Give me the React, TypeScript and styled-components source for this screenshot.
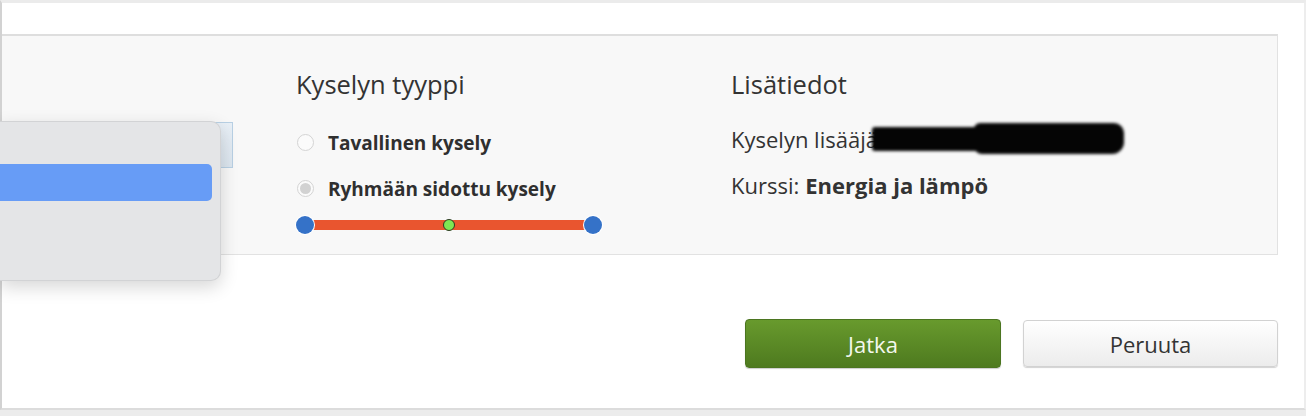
import styled, { createGlobalStyle } from "styled-components"

const GlobalStyle = createGlobalStyle`
  html, body {
    margin: 0;
    padding: 0;
    background: #ffffff;
  }
  body {
    font-family: "Open Sans", "Liberation Sans", sans-serif;
    color: #333333;
  }
  * { box-sizing: border-box; }
`

const Page = styled.div`
  width: 1306px;
  height: 416px;
  display: flex;
  flex-direction: column;
  overflow: hidden;
`

const Main = styled.div`
  position: relative;
  flex: 1;
  display: flex;
  flex-direction: column;
  border-top: 3px solid #ebebeb;
  border-left: 2px solid #d2d2d2;
  border-right: 2px solid #ededed;
  border-bottom: 2px solid #dcdcdc;
  padding: 31px 26px 0 0;
`

const BottomStripe = styled.div`
  height: 6px;
  background: #ececec;
`

const Panel = styled.div`
  height: 221px;
  display: grid;
  grid-template-columns: 294px 435px 1fr;
  background: #f8f8f8;
  border: 1px solid #e2e2e2;
  border-top: 2px solid #dedede;
  border-left: none;
  padding-top: 33px;
`

const Column = styled.div`
  display: flex;
  flex-direction: column;
  align-items: flex-start;
`

const Heading = styled.h3`
  margin: 0;
  font-size: 25.5px;
  line-height: 30px;
  font-weight: 400;
  color: #333;
`

const SelectBox = styled.div`
  margin: 53px 0 0 31px;
  width: 200px;
  height: 46px;
  border: 1px solid #b8d0e4;
  background: linear-gradient(#e8eff6, #dbe5ee);
`

const RadioList = styled.div`
  margin-top: 29px;
  display: flex;
  flex-direction: column;
  gap: 16px;
`

const RadioRow = styled.label`
  height: 30px;
  display: flex;
  align-items: center;
  gap: 14px;
  padding-left: 1px;
  font-size: 19px;
  font-weight: 700;
  color: #2f2f2f;
`

const RadioCircle = styled.span<{ $checked?: boolean }>`
  width: 17px;
  height: 17px;
  margin-top: -2px;
  border-radius: 50%;
  border: 1px solid #d4d4d4;
  background: #fbfbfb;
  display: flex;
  align-items: center;
  justify-content: center;
  &::after {
    content: "";
    display: ${(p) => (p.$checked ? "block" : "none")};
    width: 11px;
    height: 11px;
    border-radius: 50%;
    background: #d2d2d2;
  }
`

const Slider = styled.div`
  position: relative;
  margin-top: 12px;
  width: 306px;
  height: 18px;
`

const Track = styled.div`
  position: absolute;
  left: 9px;
  right: 9px;
  top: 4px;
  height: 10px;
  background: #e9552f;
`

const Knob = styled.span<{ $pos: string }>`
  position: absolute;
  top: 0;
  left: ${(p) => p.$pos};
  width: 18px;
  height: 18px;
  margin-left: -9px;
  border-radius: 50%;
  background: #3572c8;
  box-shadow: 0 0 0 1px #ffffff;
`

const MidKnob = styled.span`
  position: absolute;
  top: 3px;
  left: 50%;
  width: 12px;
  height: 12px;
  margin-left: -6px;
  border-radius: 50%;
  background: #7fe553;
  border: 1px solid #2a3a20;
`

const InfoList = styled.div`
  margin-top: 25px;
  display: flex;
  flex-direction: column;
  gap: 16px;
`

const InfoRow = styled.div`
  height: 30px;
  display: flex;
  align-items: center;
  font-size: 22px;
  color: #333;
  white-space: nowrap;
  b {
    font-weight: 700;
    margin-left: 6px;
  }
`

const Redacted = styled.span`
  display: inline-block;
  position: relative;
  width: 252px;
  height: 24px;
  margin: 0 0 0 -12px;
  background: #050505;
  border-radius: 3px 8px 10px 3px;
  filter: blur(1.4px);
  &::after {
    content: "";
    position: absolute;
    right: 0;
    top: -4px;
    width: 150px;
    height: 31px;
    background: #050505;
    border-radius: 6px 10px 12px 8px;
  }
`

const Actions = styled.div`
  margin-top: 64px;
  display: flex;
  justify-content: flex-end;
  align-items: center;
  gap: 22px;
`

const Button = styled.button<{ $primary?: boolean }>`
  width: ${(p) => (p.$primary ? "256px" : "255px")};
  height: ${(p) => (p.$primary ? "49px" : "47px")};
  border-radius: 4px;
  font-family: "Open Sans", "Liberation Sans", sans-serif;
  font-size: 22px;
  cursor: pointer;
  color: ${(p) => (p.$primary ? "#f4f8ee" : "#333")};
  border: 1px solid ${(p) => (p.$primary ? "#4b7520" : "#d2d2d2")};
  background: ${(p) =>
    p.$primary
      ? "linear-gradient(#689a2d, #4e7a1f)"
      : "linear-gradient(#ffffff, #ececec)"};
  box-shadow: ${(p) =>
    p.$primary ? "0 1px 1px rgba(0,0,0,0.2)" : "0 1px 1px rgba(0,0,0,0.18)"};
`

const Popup = styled.div`
  position: absolute;
  left: -2px;
  top: 118px;
  width: 221px;
  height: 160px;
  padding: 42px 8px 0 0;
  background: #e4e5e7;
  border: 1px solid #d2d3d5;
  border-left: none;
  border-radius: 0 10px 10px 0;
  box-shadow: 0 6px 18px rgba(0, 0, 0, 0.16);
`

const PopupItem = styled.div<{ $selected?: boolean }>`
  height: 37px;
  border-radius: 0 5px 5px 0;
  background: ${(p) => (p.$selected ? "#679cf6" : "transparent")};
`

const App = () => {
  return (
    <Page>
      <GlobalStyle />
      <Main>
        <Panel>
          <Column>
            <SelectBox />
          </Column>

          <Column>
            <Heading>Kyselyn tyyppi</Heading>
            <RadioList>
              <RadioRow>
                <RadioCircle />
                Tavallinen kysely
              </RadioRow>
              <RadioRow>
                <RadioCircle $checked />
                Ryhmään sidottu kysely
              </RadioRow>
            </RadioList>
            <Slider>
              <Track />
              <Knob $pos="9px" />
              <MidKnob />
              <Knob $pos="297px" />
            </Slider>
          </Column>

          <Column>
            <Heading>Lisätiedot</Heading>
            <InfoList>
              <InfoRow>
                Kyselyn lisääjä:
                <Redacted />
              </InfoRow>
              <InfoRow>
                Kurssi:<b>Energia ja lämpö</b>
              </InfoRow>
            </InfoList>
          </Column>
        </Panel>

        <Actions>
          <Button $primary>Jatka</Button>
          <Button>Peruuta</Button>
        </Actions>

        <Popup>
          <PopupItem $selected />
          <PopupItem />
        </Popup>
      </Main>
      <BottomStripe />
    </Page>
  )
}

export default App
